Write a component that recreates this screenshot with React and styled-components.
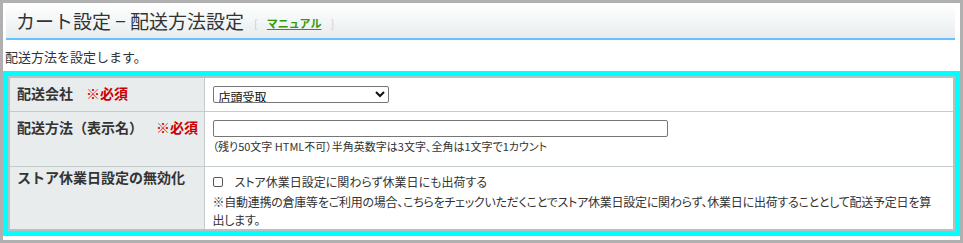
import React from 'react';
import styled, { createGlobalStyle } from 'styled-components';

const GlobalStyle = createGlobalStyle`
  html, body {
    margin: 0;
    padding: 0;
    background: #ffffff;
  }
  body {
    font-family: "Noto Sans CJK JP", "Noto Sans", sans-serif;
    color: #333333;
  }
`;

const Frame = styled.div`
  box-sizing: border-box;
  width: 963px;
  height: 243px;
  border: 3px solid #b0b0b0;
  background: #ffffff;
  overflow: hidden;
`;

const Header = styled.div`
  box-sizing: border-box;
  height: 37px;
  margin: 0 5px 0 3px;
  padding: 0 0 0 10px;
  display: flex;
  align-items: center;
  gap: 10px;
  background: linear-gradient(#ffffff, #e8edef);
  border-bottom: 2px solid #66c2ff;
`;

const Title = styled.h1`
  margin: 0;
  font-size: 19px;
  font-weight: normal;
  line-height: 24px;
  color: #333333;
`;

const Manual = styled.span`
  display: flex;
  align-items: center;
  gap: 9px;
  font-size: 11px;
  line-height: 14px;
  color: #cccccc;
  padding-top: 4px;
`;

const ManualLink = styled.a`
  color: #339900;
  font-weight: bold;
  text-decoration: underline;
  cursor: pointer;
`;

const Lead = styled.p`
  margin: 0;
  padding: 9px 0 0 2px;
  height: 22px;
  font-size: 13px;
  line-height: 16px;
  color: #333333;
`;

const Highlight = styled.div`
  border: 5px solid #00ffff;
`;

const Table = styled.table`
  width: 100%;
  border-collapse: collapse;
  border: 2px solid #b8c1c1;
  table-layout: fixed;
`;

const Label = styled.th`
  width: 195px;
  box-sizing: border-box;
  height: ${(p) => p.h}px;
  padding: ${(p) => p.pt}px 4px 0 7px;
  vertical-align: top;
  text-align: left;
  background: #e8eced;
  border: 1px solid #c3cbcb;
  font-size: 14px;
  line-height: 18px;
  font-weight: bold;
  color: #333333;
`;

const Required = styled.span`
  color: #cc0000;
  margin-left: 13px;
`;

const Value = styled.td`
  padding: ${(p) => p.pt}px 8px 0 8px;
  vertical-align: top;
  background: #ffffff;
  border: 1px solid #c3cbcb;
  font-size: 12px;
  line-height: 18px;
  color: #333333;
`;

const Select = styled.select`
  display: block;
  box-sizing: border-box;
  width: 176px;
  height: 17px;
  padding: 0 1px;
  font-family: inherit;
  font-size: 12px;
  line-height: 13px;
  color: #111111;
  border: 1px solid #767676;
  border-radius: 2px;
  background: #ffffff;
`;

const TextInput = styled.input`
  display: block;
  box-sizing: border-box;
  width: 455px;
  height: 17px;
  margin: 0;
  border: 1px solid #767676;
  border-radius: 2px;
`;

const Note = styled.div`
  font-size: 11px;
  line-height: 16px;
  margin-top: 1px;
  font-feature-settings: "palt";
`;

const CheckLine = styled.label`
  display: flex;
  align-items: center;
  height: 22px;
  font-feature-settings: "palt";
`;

const Box = styled.input`
  appearance: none;
  box-sizing: border-box;
  width: 10px;
  height: 10px;
  margin: 0 12px 0 0;
  border: 1px solid #555555;
  border-radius: 2px;
  background: #ffffff;
`;

const Remark = styled.div`
  margin-right: 12px;
  font-feature-settings: "palt";
  letter-spacing: -0.25px;
`;

export default function App() {
  return (
    <>
      <GlobalStyle />
      <Frame>
        <Header>
          <Title>カート設定 − 配送方法設定</Title>
          <Manual>
            [<ManualLink>マニュアル</ManualLink>]
          </Manual>
        </Header>
        <Lead>配送方法を設定します。</Lead>
        <Highlight>
          <Table>
            <tbody>
              <tr>
                <Label h={34} pt={6}>
                  配送会社<Required>※必須</Required>
                </Label>
                <Value pt={8}>
                  <Select defaultValue="store">
                    <option value="store">店頭受取</option>
                  </Select>
                </Value>
              </tr>
              <tr>
                <Label h={55} pt={6}>
                  配送方法（表示名）<Required>※必須</Required>
                </Label>
                <Value pt={8}>
                  <TextInput type="text" />
                  <Note>（残り50文字 HTML不可）半角英数字は3文字、全角は1文字で1カウント</Note>
                </Value>
              </tr>
              <tr>
                <Label h={63} pt={1}>
                  ストア休業日設定の無効化
                </Label>
                <Value pt={4}>
                  <CheckLine>
                    <Box type="checkbox" />
                    ストア休業日設定に関わらず休業日にも出荷する
                  </CheckLine>
                  <Remark>
                    ※自動連携の倉庫等をご利用の場合、こちらをチェックいただくことでストア休業日設定に関わらず、休業日に出荷することとして配送予定日を算出します。
                  </Remark>
                </Value>
              </tr>
            </tbody>
          </Table>
        </Highlight>
      </Frame>
    </>
  );
}
